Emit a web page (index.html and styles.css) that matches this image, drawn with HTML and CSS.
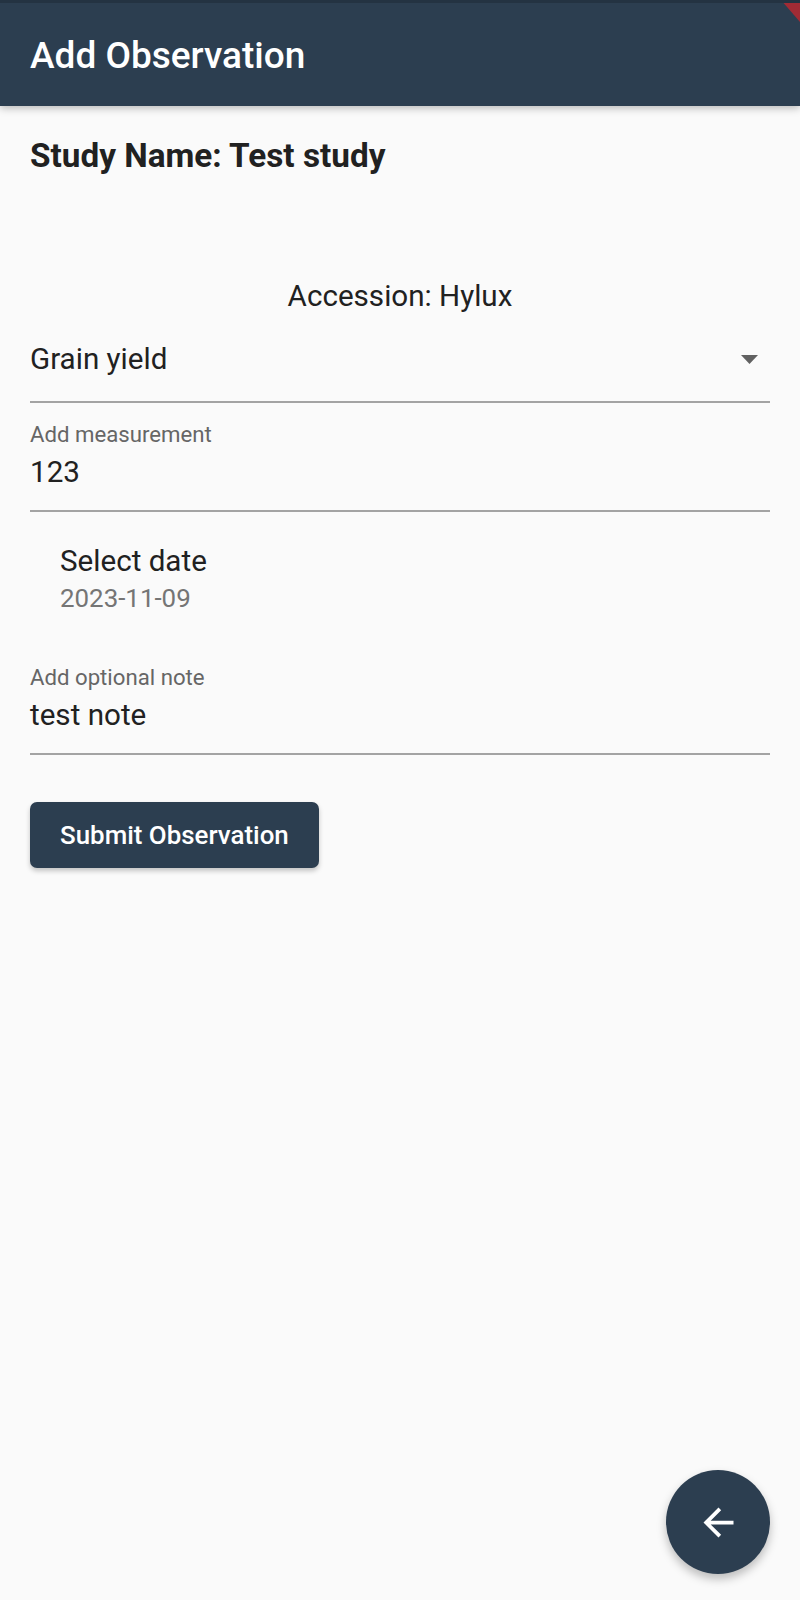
FILE: index.html
```html
<!DOCTYPE html>
<html lang="en">
<head>
<meta charset="utf-8">
<title>Add Observation</title>
<link rel="stylesheet" href="styles.css">
</head>
<body>
<header class="appbar">
  <h1 class="appbar-title">Add Observation</h1>
  <div class="debug-corner"></div>
</header>
<main class="content">
  <h2 class="study">Study Name: Test study</h2>
  <p class="accession">Accession: Hylux</p>
  <div class="field dropdown">
    <span class="value">Grain yield</span>
    <svg class="caret" viewBox="0 0 17 9" width="17" height="9"><polygon points="0,0 17,0 8.5,9" /></svg>
  </div>
  <div class="field">
    <label class="field-label">Add measurement</label>
    <div class="value value-gap">123</div>
  </div>
  <div class="tile">
    <div class="tile-title">Select date</div>
    <div class="tile-sub">2023-11-09</div>
  </div>
  <div class="field note">
    <label class="field-label">Add optional note</label>
    <div class="value value-gap-sm">test note</div>
  </div>
  <button class="submit">Submit Observation</button>
</main>
<button class="fab" aria-label="Back">
  <svg viewBox="0 0 24 24" width="45" height="45"><path d="M20 11H7.83l5.59-5.59L12 4l-8 8 8 8 1.41-1.41L7.83 13H20v-2z"/></svg>
</button>
</body>
</html>
```
FILE: styles.css
```css
* { box-sizing: border-box; }
html, body {
  margin: 0;
  padding: 0;
}
body {
  width: 800px;
  height: 1600px;
  background: #fafafa;
  font-family: Roboto, "Liberation Sans", sans-serif;
  color: #212121;
  position: relative;
  overflow: hidden;
}
.appbar {
  position: relative;
  height: 106px;
  background: #2c3e50;
  border-top: 3px solid #243342;
  padding: 2px 30px 0;
  display: flex;
  align-items: center;
  box-shadow: 0 2px 8px rgba(0, 0, 0, 0.28);
  overflow: hidden;
  z-index: 1;
}
.appbar-title {
  margin: 0;
  font-size: 37px;
  font-weight: 500;
  line-height: 44px;
  color: #ffffff;
}
.debug-corner {
  position: absolute;
  top: -3px;
  right: 0;
  width: 19px;
  height: 22px;
  background: #a12b35;
  clip-path: polygon(0 0, 100% 0, 100% 100%);
}
.content {
  padding: 0 30px;
}
.study {
  margin: 30px 0 0;
  font-size: 33.3px;
  font-weight: 700;
  line-height: 40px;
  color: #212121;
}
.accession {
  margin: 102px 0 0;
  text-align: center;
  font-size: 29.6px;
  line-height: 36px;
  color: #212121;
}
.field {
  border-bottom: 2px solid #a3a3a3;
}
.dropdown {
  margin-top: 27px;
  padding-bottom: 24px;
  display: flex;
  justify-content: space-between;
  align-items: center;
}
.value {
  font-size: 29.6px;
  line-height: 36px;
  color: #212121;
}
.caret {
  margin-right: 12px;
  fill: #616161;
}
.field-label {
  display: block;
  font-size: 22.2px;
  line-height: 27px;
  color: #666666;
}
.field:nth-of-type(2) {
  margin-top: 18px;
  padding-bottom: 20px;
}
.value-gap { margin-top: 6px; }
.value-gap-sm { margin-top: 6px; }
.tile {
  margin-top: 31px;
  padding-left: 30px;
}
.tile-title {
  font-size: 29.6px;
  line-height: 36px;
  color: #212121;
}
.tile-sub {
  margin-top: 3px;
  font-size: 25.9px;
  line-height: 32px;
  color: #757575;
}
.note {
  margin-top: 50px;
  padding-bottom: 20px;
}
.submit {
  display: block;
  margin-top: 47px;
  height: 66px;
  padding: 0 30px;
  border: none;
  border-radius: 7px;
  background: #2c3e50;
  color: #ffffff;
  font-family: Roboto, "Liberation Sans", sans-serif;
  font-size: 25.9px;
  font-weight: 500;
  box-shadow: 0 3px 5px rgba(0, 0, 0, 0.22);
}
.fab {
  position: absolute;
  right: 30px;
  bottom: 26px;
  width: 104px;
  height: 104px;
  border-radius: 50%;
  border: none;
  padding: 0;
  background: #2c3e50;
  display: flex;
  align-items: center;
  justify-content: center;
  box-shadow: 0 5px 10px rgba(0, 0, 0, 0.25);
}
.fab svg { fill: #ffffff; }
```
